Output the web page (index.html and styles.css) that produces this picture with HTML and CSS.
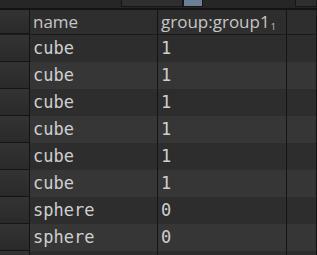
FILE: index.html
```html
<!DOCTYPE html>
<html lang="en">

<head>
    <meta charset="UTF-8">
    <meta name="viewport" content="width=device-width, initial-scale=1.0">
    <title>Geometry Spreadsheet</title>
    <link rel="stylesheet" href="styles.css">
</head>

<body>
    <div class="toolbar">
        <span class="tool tool-a"></span>
        <span class="tool tool-on"></span>
        <span class="spacer"></span>
        <span class="tool tool-b"></span>
    </div>

    <div class="sheet">
        <div class="row head">
            <div class="num"></div>
            <div class="cell">name</div>
            <div class="cell">group:group1<sub>1</sub></div>
            <div class="cell"></div>
        </div>
        <div class="row">
            <div class="num"></div>
            <div class="cell mono">cube</div>
            <div class="cell mono">1</div>
            <div class="cell"></div>
        </div>
        <div class="row alt">
            <div class="num"></div>
            <div class="cell mono">cube</div>
            <div class="cell mono">1</div>
            <div class="cell"></div>
        </div>
        <div class="row">
            <div class="num"></div>
            <div class="cell mono">cube</div>
            <div class="cell mono">1</div>
            <div class="cell"></div>
        </div>
        <div class="row alt">
            <div class="num"></div>
            <div class="cell mono">cube</div>
            <div class="cell mono">1</div>
            <div class="cell"></div>
        </div>
        <div class="row">
            <div class="num"></div>
            <div class="cell mono">cube</div>
            <div class="cell mono">1</div>
            <div class="cell"></div>
        </div>
        <div class="row alt">
            <div class="num"></div>
            <div class="cell mono">cube</div>
            <div class="cell mono">1</div>
            <div class="cell"></div>
        </div>
        <div class="row">
            <div class="num"></div>
            <div class="cell mono">sphere</div>
            <div class="cell mono">0</div>
            <div class="cell"></div>
        </div>
        <div class="row alt">
            <div class="num"></div>
            <div class="cell mono">sphere</div>
            <div class="cell mono">0</div>
            <div class="cell"></div>
        </div>
        <div class="row">
            <div class="num"></div>
            <div class="cell mono"></div>
            <div class="cell mono"></div>
            <div class="cell"></div>
        </div>
    </div>
</body>

</html>
```

FILE: styles.css
```css
body {
    margin: 0;
    padding: 0;
    background-color: #2b2b2b;
    font-family: 'Open Sans', 'Noto Sans', sans-serif;
    color: #cacaca;
    overflow: hidden;
    height: 255px;
}

.toolbar {
    display: flex;
    height: 8px;
    background-color: #262626;
    border-bottom: 2px solid #131313;
}

.tool {
    display: block;
    height: 6px;
    border: 1px solid #161616;
    border-top: none;
    background-color: #2f2f2f;
}

.tool-a {
    margin-left: 121px;
    width: 60px;
}

.tool-on {
    width: 18px;
    background-color: #6d7f96;
}

.tool-b {
    width: 20px;
}

.spacer {
    flex: 1;
}

.row {
    display: grid;
    grid-template-columns: 30px 128px 129px 1fr;
    height: 27px;
    background-color: #2d2d2d;
}

.row.alt {
    background-color: #363636;
}

.row.head {
    height: 24px;
    background-color: #2e2e2e;
    border-bottom: 1px solid #1c1c1c;
}

.num {
    background: linear-gradient(#333333, #2a2a2a);
    border-right: 1px solid #131313;
    border-bottom: 1px solid #141414;
}

.cell {
    border-right: 1px solid #141414;
    padding-left: 3px;
    font-size: 17px;
    line-height: 27px;
    white-space: nowrap;
    overflow: hidden;
}

.head .cell {
    line-height: 24px;
    color: #c6c6c6;
}

.head sub {
    font-size: 9px;
    vertical-align: -2px;
    margin-left: 1px;
}

.mono {
    font-family: 'DejaVu Sans Mono', monospace;
    font-size: 17px;
    color: #cfcfcf;
}
```
